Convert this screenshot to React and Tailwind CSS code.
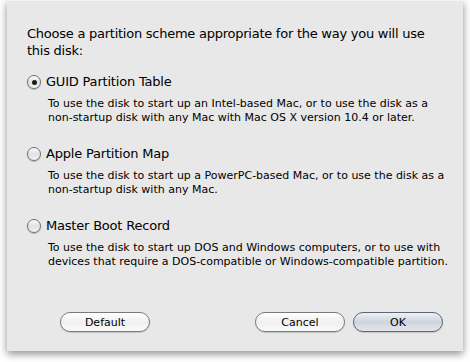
import React, { useState } from 'react';

const options = [
  {
    id: 'guid',
    label: 'GUID Partition Table',
    lines: [
      'To use the disk to start up an Intel-based Mac, or to use the disk as a',
      'non-startup disk with any Mac with Mac OS X version 10.4 or later.',
    ],
  },
  {
    id: 'apm',
    label: 'Apple Partition Map',
    lines: [
      'To use the disk to start up a PowerPC-based Mac, or to use the disk as a',
      'non-startup disk with any Mac.',
    ],
  },
  {
    id: 'mbr',
    label: 'Master Boot Record',
    lines: [
      'To use the disk to start up DOS and Windows computers, or to use with',
      'devices that require a DOS-compatible or Windows-compatible partition.',
    ],
  },
];

function Radio({ checked }) {
  return (
    <span className="relative flex h-[14px] w-[14px] shrink-0 items-center justify-center rounded-full border border-[#6f6f6f] bg-gradient-to-b from-[#fdfdfd] via-[#e2e2e2] to-[#f4f4f4] shadow-[0_1px_1px_rgba(0,0,0,0.2)]">
      {checked && <span className="h-[5px] w-[5px] rounded-full bg-[#1a1a1a]" />}
    </span>
  );
}

function Button({ children, primary }) {
  return (
    <button
      className={
        'h-[20px] w-[90px] rounded-full border text-[11px] leading-none text-black shadow-[0_1px_1px_rgba(0,0,0,0.15)] ' +
        (primary
          ? 'border-[#5b6676] bg-gradient-to-b from-[#eef0f4] via-[#cfd4dc] to-[#e3e7ec]'
          : 'border-[#7a7a7a] bg-gradient-to-b from-[#ffffff] via-[#f0f0f0] to-[#fafafa]')
      }
    >
      {children}
    </button>
  );
}

export default function App() {
  const [choice, setChoice] = useState('guid');
  return (
    <div className="h-[362px] w-[470px] bg-white px-[7px] font-['DejaVu_Sans',sans-serif]">
      <div className="flex h-[351px] flex-col border-t border-[#f4f4f4] bg-[#e8e8e8] px-[20px] pt-[24px] shadow-[0_3px_8px_rgba(0,0,0,0.45)]">
        <p className="text-[13px] leading-[17px] tracking-[-0.25px] text-black">
          Choose a partition scheme appropriate for the way you will use
          <br />
          this disk:
        </p>
        <div className="mt-[14px] flex flex-col gap-[20px]">
          {options.map((o) => (
            <div key={o.id} className="cursor-default" onClick={() => setChoice(o.id)}>
              <div className="flex items-center gap-[5px]">
                <Radio checked={choice === o.id} />
                <span className="text-[13px] leading-[18px] tracking-[-0.2px] text-black">{o.label}</span>
              </div>
              <p className="mt-[6px] whitespace-nowrap pl-[21px] text-[11px] leading-[14px] text-black">
                {o.lines[0]}
                <br />
                {o.lines[1]}
              </p>
            </div>
          ))}
        </div>
        <div className="mt-auto mb-[19px] flex items-center pl-[33px]">
          <Button>Default</Button>
          <div className="flex-1" />
          <div className="flex gap-[8px]">
            <Button>Cancel</Button>
            <Button primary>OK</Button>
          </div>
        </div>
      </div>
    </div>
  );
}
